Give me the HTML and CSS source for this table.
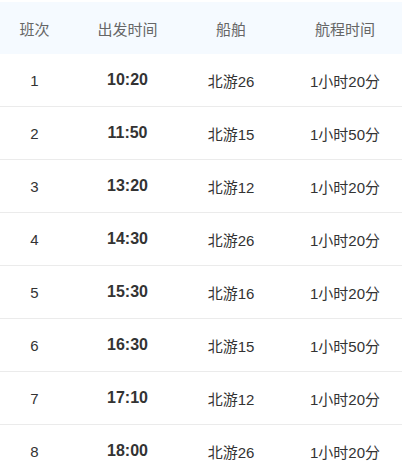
FILE: index.html
```
<!DOCTYPE html>
<html lang="zh">
<head>
<meta charset="utf-8">
<link rel="stylesheet" href="styles.css">
</head>
<body>
<div class="table">
  <div class="row head">
    <div class="c c1">班次</div><div class="c c2">出发时间</div><div class="c c3">船舶</div><div class="c c4">航程时间</div>
  </div>
  <div class="row"><div class="c c1">1</div><div class="c c2 t">10:20</div><div class="c c3">北游26</div><div class="c c4">1小时20分</div></div>
  <div class="row"><div class="c c1">2</div><div class="c c2 t">11:50</div><div class="c c3">北游15</div><div class="c c4">1小时50分</div></div>
  <div class="row"><div class="c c1">3</div><div class="c c2 t">13:20</div><div class="c c3">北游12</div><div class="c c4">1小时20分</div></div>
  <div class="row"><div class="c c1">4</div><div class="c c2 t">14:30</div><div class="c c3">北游26</div><div class="c c4">1小时20分</div></div>
  <div class="row"><div class="c c1">5</div><div class="c c2 t">15:30</div><div class="c c3">北游16</div><div class="c c4">1小时20分</div></div>
  <div class="row"><div class="c c1">6</div><div class="c c2 t">16:30</div><div class="c c3">北游15</div><div class="c c4">1小时50分</div></div>
  <div class="row"><div class="c c1">7</div><div class="c c2 t">17:10</div><div class="c c3">北游12</div><div class="c c4">1小时20分</div></div>
  <div class="row"><div class="c c1">8</div><div class="c c2 t">18:00</div><div class="c c3">北游26</div><div class="c c4">1小时20分</div></div>
</div>
</body>
</html>
```
FILE: styles.css
```
html, body {
  margin: 0;
  padding: 0;
  background: #fff;
}
body {
  padding-top: 2px;
  font-family: "Liberation Sans", "Noto Sans CJK SC", sans-serif;
  font-size: 15px;
  color: #333;
}
.table {
  width: 402px;
}
.row {
  display: grid;
  grid-template-columns: 69px 117px 90px 126px;
  height: 53px;
  align-items: center;
  border-bottom: 1px solid #ebebeb;
  box-sizing: border-box;
}
.row.head {
  background: #f5faff;
  color: #666;
  border-bottom: none;
  height: 52px;
}
.c {
  text-align: center;
  white-space: nowrap;
}
.c4 {
  padding-left: 12px;
}
.t {
  font-weight: bold;
  font-size: 16px;
  color: #333;
}
```
